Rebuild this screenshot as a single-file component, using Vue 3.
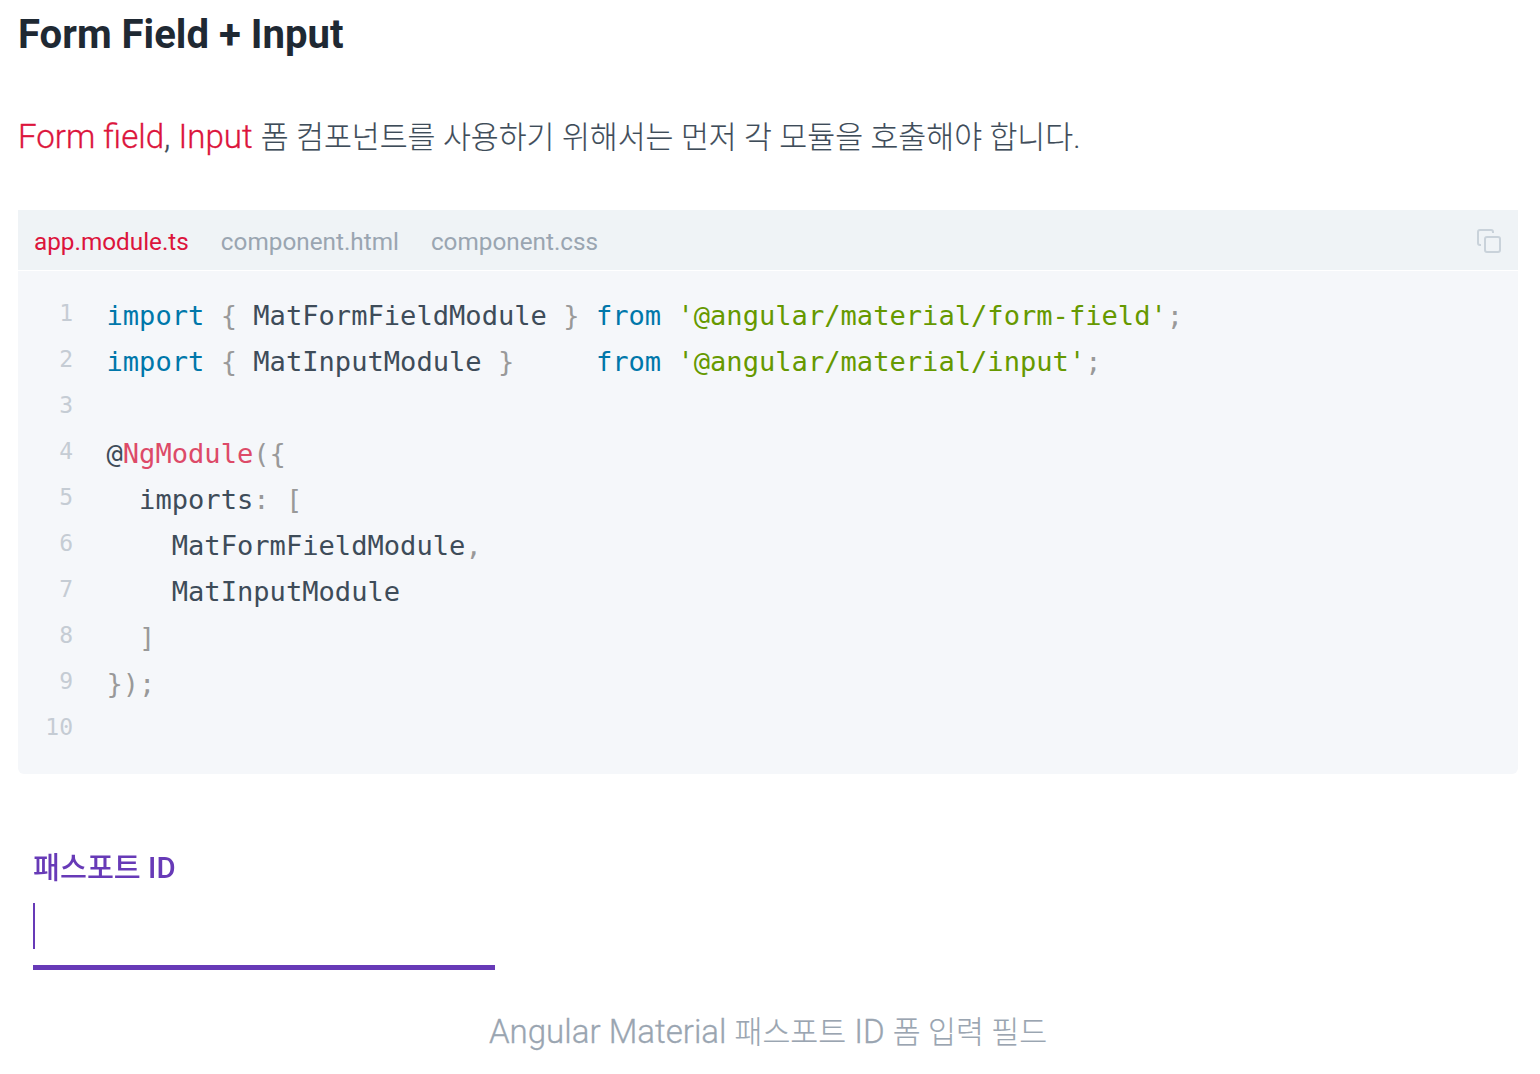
<script setup>
const lines = [
  [['k','import'],['p',' { '],['t','MatFormFieldModule'],['p',' } '],['k','from'],['p',' '],['s',"'@angular/material/form-field'"],['p',';']],
  [['k','import'],['p',' { '],['t','MatInputModule'],['p',' }     '],['k','from'],['p',' '],['s',"'@angular/material/input'"],['p',';']],
  [],
  [['t','@'],['d','NgModule'],['p','({']],
  [['t','  imports'],['p',': [']],
  [['t','    MatFormFieldModule'],['p',',']],
  [['t','    MatInputModule']],
  [['p','  ]']],
  [['p','});']],
  [],
]
</script>

<template>
  <main class="page">
    <h2 class="title">Form Field + Input</h2>
    <p class="lead"><span class="red">Form field</span>, <span class="red">Input</span> <span class="ko">폼 컴포넌트를 사용하기 위해서는 먼저 각 모듈을 호출해야 합니다.</span></p>

    <section class="code-card">
      <div class="tabs">
        <span class="tab active">app.module.ts</span>
        <span class="tab">component.html</span>
        <span class="tab">component.css</span>
        <svg class="copy" width="26" height="26" viewBox="0 0 26 26" fill="none" stroke="#c9d2da" stroke-width="2">
          <rect x="9" y="9" width="15" height="15" rx="2" />
          <path d="M5 17H4a2 2 0 0 1-2-2V4a2 2 0 0 1 2-2h11a2 2 0 0 1 2 2v1" />
        </svg>
      </div>
      <div class="code">
        <div v-for="(line, i) in lines" :key="i" class="row">
          <span class="num">{{ i + 1 }}</span>
          <code class="src"><span v-for="(tok, j) in line" :key="j" :class="tok[0]">{{ tok[1] }}</span></code>
        </div>
      </div>
    </section>

    <div class="field">
      <label class="label">패스포트 ID</label>
      <div class="caret"></div>
      <div class="underline"></div>
    </div>

    <p class="caption">Angular Material <span class="ko">패스포트</span> ID <span class="ko">폼 입력 필드</span></p>
  </main>
</template>

<style>
html, body { margin: 0; background: #fff; }
</style>

<style scoped>
.page {
  padding: 0 22px 0 18px;
  font-family: Roboto, "Noto Sans CJK KR", sans-serif;
  color: #3e4c59;
}
.title {
  margin: 0;
  padding-top: 10px;
  font-size: 40.1px;
  line-height: 50px;
  font-weight: 700;
  color: #1f2933;
}
.lead {
  margin: 0;
  padding-top: 53px;
  font-size: 33.1px;
  line-height: 48px;
  font-weight: 300;
  -webkit-text-stroke: 0.3px currentColor;
}
.ko { font-size: 30.33px; font-weight: 300; -webkit-text-stroke: 0.15px currentColor; }
.red { color: #dc143c; }
.code-card { margin-top: 48px; }
.tabs {
  height: 60px;
  display: flex;
  align-items: center;
  gap: 32px;
  padding: 2px 16px 0 16px;
  box-sizing: border-box;
  background: #eff3f6;
  font-size: 24.3px;
  color: #9aa5b1;
}
.tab.active { color: #dc143c; }
.copy { margin-left: auto; margin-top: -1px; }
.code {
  margin-top: 1px;
  padding: 22px 0 21px;
  background: #f5f7fa;
  border-radius: 0 0 6px 6px;
}
.row { display: flex; height: 46px; }
.num {
  width: 55px;
  flex: none;
  text-align: right;
  font: 23px/40px "DejaVu Sans Mono", monospace;
  color: #c5ccd4;
}
.src {
  margin-left: 33.5px;
  font: 27.1px/46px "DejaVu Sans Mono", monospace;
  white-space: pre;
  color: #3e4c59;
}
.k { color: #07a; }
.p { color: #999; }
.s { color: #690; }
.d { color: #dd4a68; }
.field { padding: 72px 0 0 15px; }
.label {
  display: block;
  font-size: 29.3px;
  line-height: 44px;
  font-weight: 500;
  color: #673ab7;
  filter: blur(0.4px);
}
.caret { width: 2px; height: 46px; margin-top: 13px; background: #673ab7; }
.underline { width: 462px; height: 5px; margin-top: 16px; background: #673ab7; }
.caption {
  margin: 0;
  padding-top: 38px;
  font-size: 33.1px;
  line-height: 48px;
  font-weight: 300;
  -webkit-text-stroke: 0.3px currentColor;
  text-align: center;
  color: #9aa5b1;
}
</style>
